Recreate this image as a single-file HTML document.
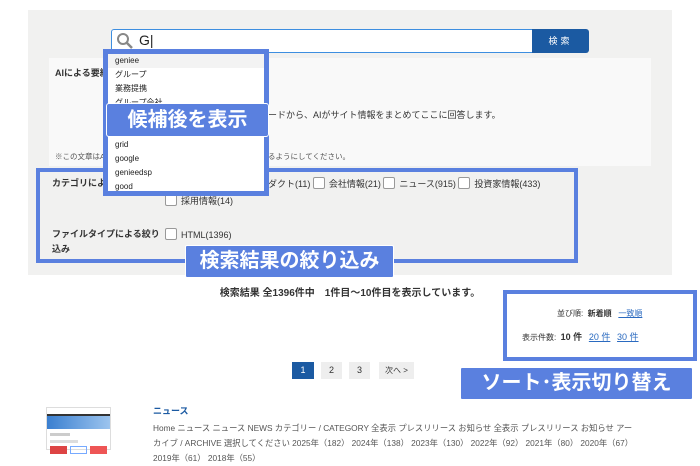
<!DOCTYPE html>
<html><head><meta charset="utf-8"><style>
*{box-sizing:border-box;margin:0;padding:0}
body{width:700px;height:450px;overflow:hidden;background:#fff;font-family:"Liberation Sans","Noto Sans CJK JP",sans-serif;position:relative;color:#333}
.a{position:absolute}
.cb{display:inline-block;width:12px;height:12px;border:1px solid #999;border-radius:2px;background:#fff;vertical-align:-2px;margin-right:4px}
.lbl{background:#5a80df;color:#fff;font-weight:bold;text-align:center;border:1px solid #fff}
</style></head><body>
<div class="a" style="left:28px;top:10px;width:644px;height:265px;background:#f1f1f0"></div>
<div class="a" style="left:49px;top:58px;width:602px;height:108px;background:#f9f9f9"></div>
<div class="a" style="left:55px;top:66px;font-size:9px;font-weight:bold;color:#333">AIによる要約</div>
<div class="a" style="left:268px;top:108px;font-size:9px;color:#333">ードから、AIがサイト情報をまとめてここに回答します。</div>
<div class="a" style="left:55px;top:151px;font-size:7.5px;color:#555">※この文章はA</div>
<div class="a" style="left:268px;top:151px;font-size:7.5px;color:#555">るようにしてください。</div>
<!-- search -->
<div class="a" style="left:111px;top:29px;width:422px;height:24px;border:1px solid #3d8ee0;background:#fff;border-radius:3px 0 0 3px"></div>
<svg class="a" style="left:116px;top:32px" width="18" height="18" viewBox="0 0 18 18"><circle cx="7" cy="7" r="5" fill="none" stroke="#888" stroke-width="2"/><line x1="11" y1="11" x2="16" y2="16" stroke="#888" stroke-width="2.5"/></svg>
<div class="a" style="left:139px;top:32px;font-size:14px;color:#222">G|</div>
<div class="a" style="left:532px;top:29px;width:57px;height:24px;background:#1b5aa2;color:#fff;font-size:9px;text-align:center;line-height:24px;border-radius:0 3px 3px 0;letter-spacing:3px">検索</div>
<!-- filter box -->
<div class="a" style="left:36px;top:168px;width:542px;height:95px;border:4px solid #5a80df"></div>
<div class="a" style="left:52px;top:176px;font-size:9px;font-weight:bold">カテゴリによ</div>
<div class="a" style="left:268px;top:177px;font-size:9px">ダクト(11) <span class="cb"></span>会社情報(21) <span class="cb"></span>ニュース(915) <span class="cb"></span>投資家情報(433)</div>
<div class="a" style="left:165px;top:194px;font-size:9px"><span class="cb"></span>採用情報(14)</div>
<div class="a" style="left:52px;top:227px;font-size:9px;font-weight:bold;line-height:15px">ファイルタイプによる絞り<br>込み</div>
<div class="a" style="left:165px;top:228px;font-size:9px"><span class="cb"></span>HTML(1396)</div>
<div class="a lbl" style="left:185px;top:245px;width:209px;height:33px;font-size:20px;line-height:31px;border-radius:2px">検索結果の絞り込み</div>
<!-- dropdown -->
<div class="a" style="left:103px;top:49px;width:166px;height:147px;border:5px solid #5a80df;background:#fff;font-size:8px;line-height:14px;color:#222;padding-left:7px">
<div style="background:#f3f3f3;margin-left:-7px;padding-left:7px">geniee</div><div>グループ</div><div>業務提携</div><div>グループ会社</div><div>&nbsp;</div><div>&nbsp;</div><div>grid</div><div>google</div><div>genieedsp</div><div>good</div></div>
<div class="a lbl" style="left:106px;top:103px;width:163px;height:34px;font-size:20px;line-height:32px;border-radius:3px">候補後を表示</div>
<!-- results -->
<div class="a" style="left:0;top:284px;width:700px;text-align:center;font-size:10px;font-weight:bold;color:#333">検索結果 全1396件中　1件目〜10件目を表示しています。</div>
<div class="a" style="left:503px;top:290px;width:194px;height:71px;border:4px solid #5a80df;background:#fff;font-size:8.5px"></div>
<div class="a" style="left:557px;top:308px;font-size:8px">並び順:&nbsp; <b>新着順</b>&nbsp;&nbsp; <u style="color:#2a6ac0">一致順</u></div>
<div class="a" style="left:522px;top:330px;font-size:8px">表示件数:&nbsp; <b style="font-size:9px">10 件</b>&nbsp;&nbsp; <u style="color:#2a6ac0;font-size:9px">20 件</u>&nbsp;&nbsp; <u style="color:#2a6ac0;font-size:9px">30 件</u></div>
<div class="a lbl" style="left:460px;top:367px;width:233px;height:33px;font-size:20px;line-height:31px;border-radius:2px">ソート･表示切り替え</div>
<div class="a" style="left:292px;top:362px;width:22px;height:17px;background:#1b5aa2;color:#fff;font-size:9px;text-align:center;line-height:17px">1</div>
<div class="a" style="left:321px;top:362px;width:21px;height:17px;background:#eee;font-size:9px;text-align:center;line-height:17px">2</div>
<div class="a" style="left:349px;top:362px;width:21px;height:17px;background:#eee;font-size:9px;text-align:center;line-height:17px">3</div>
<div class="a" style="left:379px;top:362px;width:35px;height:17px;background:#eee;font-size:8px;text-align:center;line-height:17px">次へ &gt;</div>
<!-- item -->
<div class="a" style="left:46px;top:407px;width:65px;height:43px;background:#fff;border:1px solid #ddd">
<div style="height:6px;background:#fff"></div><div style="height:2px;background:#333"></div><div style="height:13px;background:linear-gradient(90deg,#3a7fd0,#9cc4ee)"></div>
<div style="margin:4px 3px;height:3px;width:20px;background:#ccc"></div><div style="margin:3px 3px;height:3px;width:28px;background:#ddd"></div>
<div style="display:flex;gap:3px;margin:2px 3px"><div style="width:18px;height:8px;background:#d44"></div><div style="width:18px;height:8px;border:1px solid #7af"></div><div style="width:18px;height:8px;background:#e55"></div></div></div>
<div class="a" style="left:153px;top:404px;font-size:9px;font-weight:bold;color:#1b5aa2">ニュース</div>
<div class="a" style="left:153px;top:421px;width:484px;font-size:8.3px;line-height:15px;color:#555">Home ニュース ニュース NEWS カテゴリー / CATEGORY 全表示 プレスリリース お知らせ 全表示 プレスリリース お知らせ アーカイブ / ARCHIVE 選択してください 2025年（182） 2024年（138） 2023年（130） 2022年（92） 2021年（80） 2020年（67） 2019年（61） 2018年（55）</div>
</body></html>
